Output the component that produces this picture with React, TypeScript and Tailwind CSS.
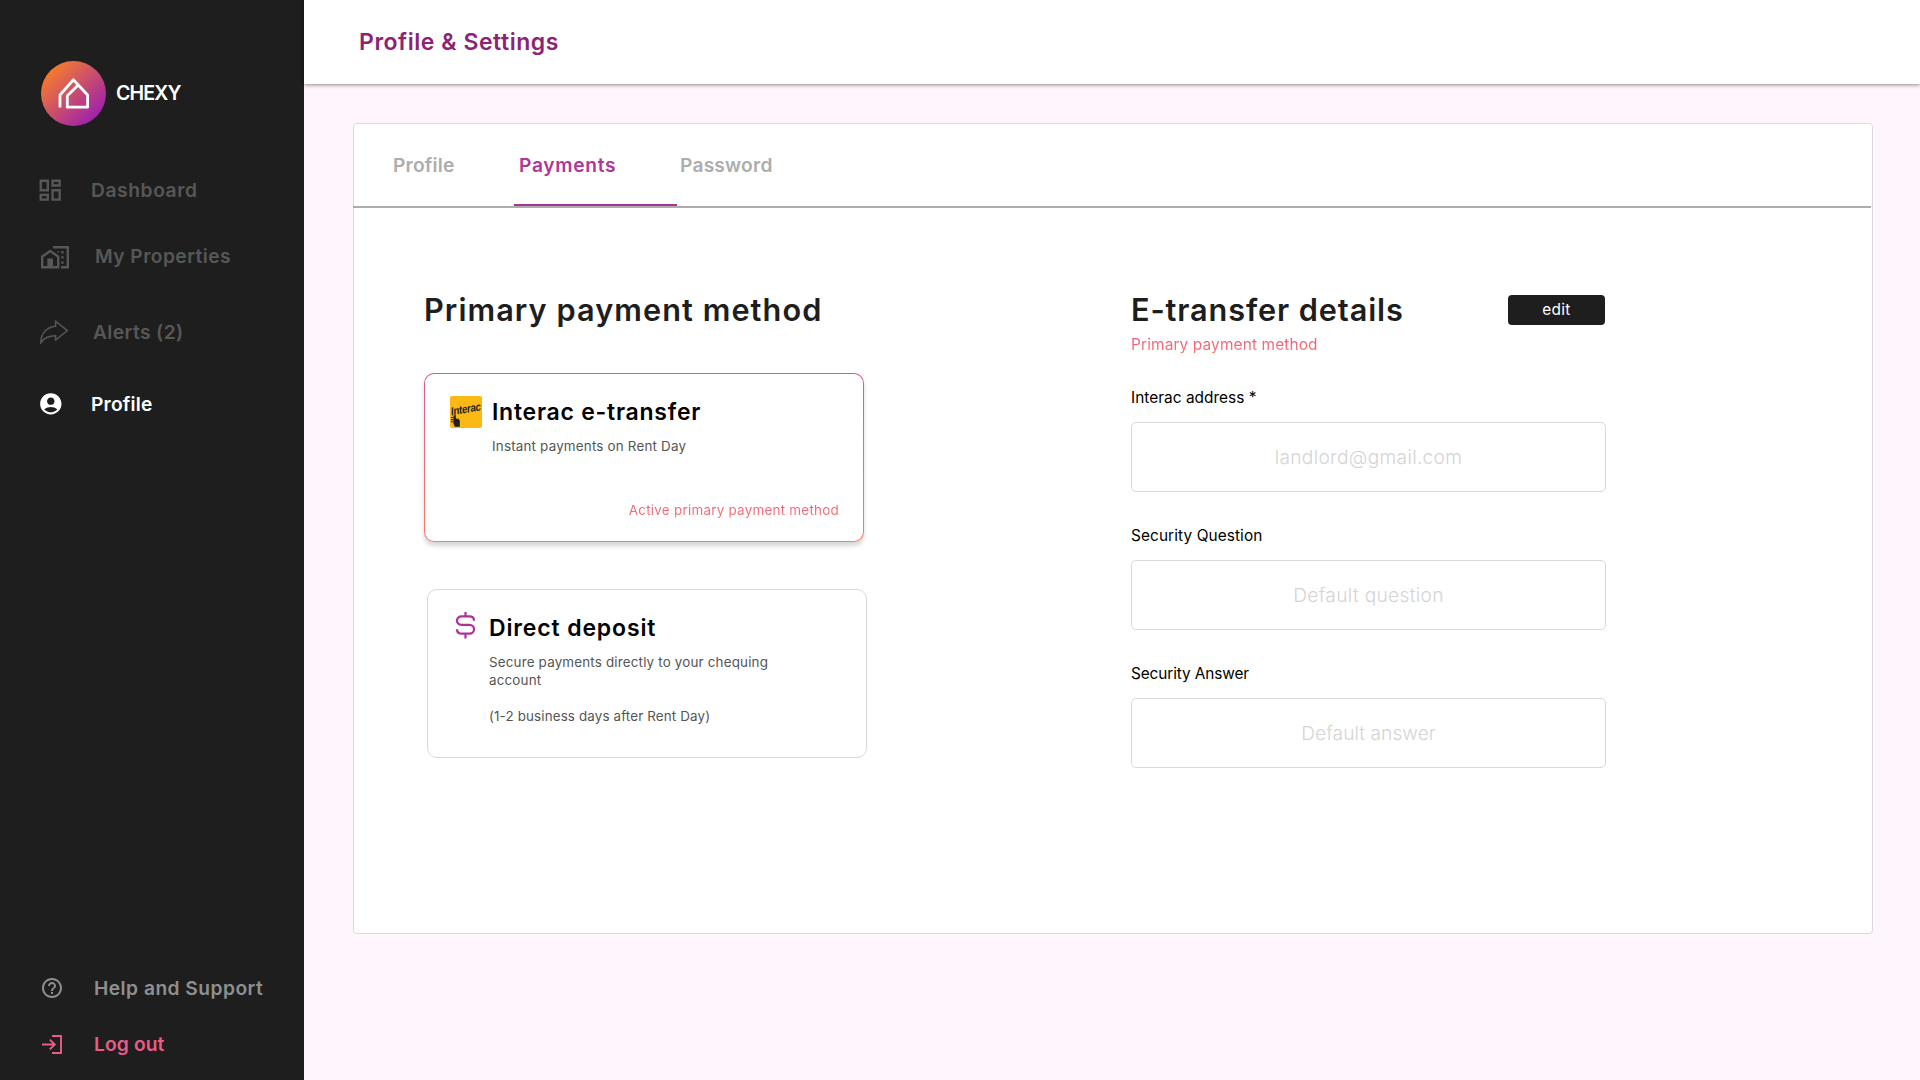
import React from "react";
import { MdAccountCircle, MdHelpOutline, MdOutlineDashboard } from "react-icons/md";

function HouseLogo() {
  return (
    <svg width="65" height="65" viewBox="0 0 65 65" fill="none" className="shrink-0">
      <defs>
        <linearGradient id="logo" x1="8" y1="8" x2="57" y2="57" gradientUnits="userSpaceOnUse">
          <stop stopColor="#f77d2a" />
          <stop offset="1" stopColor="#9c1fb0" />
        </linearGradient>
      </defs>
      <circle cx="32.5" cy="32.5" r="32.5" fill="url(#logo)" />
      <path
        d="M19 46.5V34L32.4 18.8L46.6 34V46.2H26.3V34.8L37.2 24"
        stroke="#fff"
        strokeWidth="2.8"
        strokeLinejoin="round"
      />
    </svg>
  );
}

function PropertiesIcon() {
  return (
    <svg width="28" height="23" viewBox="0 0 28 23" fill="none" stroke="currentColor" strokeWidth="2.4">
      <path d="M1.2 10.6L9.2 5L17.2 10.6V21.3H1.2Z" />
      <path d="M6.3 22V12.5H12V22Z" fill="currentColor" stroke="none" />
      <path d="M12 1.3H26.8V21.3H20" />
      <path d="M20.2 5H22.6V7.4H20.2ZM20.2 10.2H22.6V12.6H20.2ZM20.2 15.4H22.6V17.8H20.2ZM16.6 5H18V6.4H16.6Z" fill="currentColor" stroke="none" />
    </svg>
  );
}

function ShareIcon() {
  return (
    <svg width="29" height="24" viewBox="0 0 29 24" fill="none" stroke="currentColor" strokeWidth="1.5">
      <path d="M27.4 10.6L15.6 1.2V6.2C7.4 6.9 .8 12.6 .8 22.8C4 17.6 9 15.7 15.6 15.7V20Z" />
    </svg>
  );
}

function LogoutIcon() {
  return (
    <svg width="20" height="19" viewBox="0 0 20 19" fill="none" stroke="currentColor" strokeWidth="1.9">
      <path d="M0 9.5H12.6M7.8 4.6L12.8 9.5L7.8 14.4M10 1H19V18H10" />
    </svg>
  );
}

function DollarIcon() {
  return (
    <svg width="19" height="27" viewBox="0 0 19 27" fill="none" stroke="#b0309a" strokeWidth="2.2">
      <path d="M18 8.8C18 6 16 4.4 13.5 4.4H5.5C3 4.4 1 6 1 8.6S3 12.8 5.5 12.8H13.5C16 12.8 18 14.6 18 17.2S16 21.6 13.5 21.6H5.5C3 21.6 1 20 1 17.3M9.5 0V4.4M9.5 21.6V26.5" />
    </svg>
  );
}

function InteracLogo() {
  return (
    <svg width="32" height="32" viewBox="0 0 32 32" className="shrink-0">
      <rect width="32" height="32" rx="2" fill="#fdb913" />
      <text
        x="0"
        y="0"
        transform="translate(1 19.5) skewY(-10) scale(0.84 1)"
        fontFamily="Liberation Sans"
        fontWeight="700"
        fontSize="11.5"
        letterSpacing="-0.35"
        fill="#231f20"
      >
        Interac
      </text>
      <path d="M3.6 19.4L5.8 18.9V22.4L8.6 22.8L9.8 24.4V30.8H4.8L3.4 27.6Z" fill="#231f20" />
      <path d="M1 21.5H3.6M1 23.6H3.6M1 25.7H3.6" stroke="#231f20" strokeWidth="1.1" />
    </svg>
  );
}

type NavProps = { icon: React.ReactNode; label: string; row: string; gutter: string; text: string };

function NavRow({ icon, label, row, gutter, text }: NavProps) {
  return (
    <a className={`flex h-10 items-center font-semibold text-[19.2px] leading-none whitespace-nowrap ${row}`}>
      <span className={`flex shrink-0 items-center ${gutter}`}>{icon}</span>
      <span className={`pt-0.5 ${text}`}>{label}</span>
    </a>
  );
}

function Sidebar() {
  return (
    <aside className="flex h-full w-[304px] shrink-0 flex-col bg-[#1e1e1e] pt-[61px] pb-4">
      <div className="flex items-center pl-[41px] text-white">
        <HouseLogo />
        <span className="ml-[10px] text-[19.6px] leading-none font-semibold tracking-[-0.9px]">CHEXY</span>
      </div>
      <nav className="mt-11 flex flex-col text-[#575757]">
        <NavRow icon={<MdOutlineDashboard size={28.4} />} label="Dashboard" row="" gutter="w-[91px] pl-[36.4px]" text="tracking-[0.6px]" />
        <NavRow icon={<PropertiesIcon />} label="My Properties" row="mt-[26px]" gutter="w-[95px] pl-[41px] pt-[3px]" text="tracking-[0.45px]" />
        <NavRow icon={<ShareIcon />} label="Alerts (2)" row="mt-9" gutter="w-[93px] pl-10" text="tracking-[0.4px]" />
        <NavRow icon={<MdAccountCircle size={25.6} />} label="Profile" row="mt-8 text-white" gutter="w-[91px] pl-[37.8px]" text="tracking-[0.2px]" />
      </nav>
      <div className="mt-auto flex flex-col gap-4">
        <NavRow icon={<MdHelpOutline size={24} />} label="Help and Support" row="text-[#8f8f8f]" gutter="w-[94px] pl-10" text="tracking-[0.48px]" />
        <NavRow icon={<LogoutIcon />} label="Log out" row="text-[#ea5c86]" gutter="w-[94px] pl-[42px]" text="tracking-[0.13px]" />
      </div>
    </aside>
  );
}

function Field({ label, value, labelClass, valueClass }: { label: string; value: string; labelClass: string; valueClass: string }) {
  return (
    <div className="flex flex-col">
      <label className={`text-[15.4px] leading-5 text-black ${labelClass}`}>{label}</label>
      <div className={`mt-[13.5px] flex h-[70px] items-center justify-center rounded-[5px] border border-[#d9d9d9] pt-0.5 text-[19.2px] leading-none font-light text-[#d4d4d4] ${valueClass}`}>
        {value}
      </div>
    </div>
  );
}

export default function App() {
  return (
    <div className="flex h-[1080px] w-[1920px] overflow-hidden bg-[#fff5fd] font-['Inter',sans-serif]">
      <Sidebar />
      <div className="flex min-w-0 flex-1 flex-col">
        <header className="flex h-[84px] shrink-0 items-center bg-white pl-[55px] shadow-[0_1px_4px_rgba(0,0,0,0.45)]">
          <h1 className="text-[23px] leading-none font-semibold tracking-[0.54px] text-[#8c2375]">Profile &amp; Settings</h1>
        </header>
        <main className="mt-[39px] ml-[49px] flex h-[811px] w-[1520px] flex-col rounded-[4px] border border-[#dadada] bg-white">
          <div className="mr-px -ml-px flex h-[84px] shrink-0 items-stretch border-b-2 border-[#adadad] text-[19.2px] leading-none font-semibold text-[#adadad]">
            <div className="flex w-[161px] items-center pt-0.5 pl-10 tracking-[0.2px]">Profile</div>
            <div className="flex w-[163px] items-center border-b-2 border-[#ab3492] pt-1 pl-[5px] tracking-[0.68px] text-[#b23597]">Payments</div>
            <div className="flex items-center pt-0.5 pl-[3px] tracking-[0.2px]">Password</div>
          </div>
          <div className="flex">
            <section className="ml-[70px] w-[707px] pt-[82px]">
              <h2 className="text-[30.7px] leading-10 font-semibold tracking-[1.06px] whitespace-nowrap text-[#1e1e1e]">Primary payment method</h2>
              <div className="mt-[43px] flex h-[169px] w-[440px] flex-col rounded-[10px] border border-transparent bg-[linear-gradient(white,white),linear-gradient(#e3558b,#ff7a69)] [background-clip:padding-box,border-box] [background-origin:border-box] shadow-[0_4px_4px_rgba(0,0,0,0.16)]">
                <div className="flex pt-[22px] pl-[24.5px]">
                  <InteracLogo />
                  <div className="ml-[10.5px]">
                    <h3 className="mt-[2px] text-[23px] leading-7 font-semibold tracking-[0.75px] text-black">Interac e-transfer</h3>
                    <p className="mt-[11px] text-[13.4px] leading-[18px] tracking-[0.19px] text-[#555]">Instant payments on Rent Day</p>
                  </div>
                </div>
                <p className="mt-auto mr-[24px] mb-[21px] self-end bg-[linear-gradient(#e3558b,#ff7a69)] bg-clip-text text-[13.4px] leading-[20px] tracking-[0.26px] text-transparent">Active primary payment method</p>
              </div>
              <div className="mt-[47px] ml-[3px] flex h-[169px] w-[440px] rounded-[10px] border border-[#d9d9d9] pt-[22px] pl-[28px]">
                <DollarIcon />
                <div className="ml-[14px]">
                  <h3 className="mt-[1.5px] text-[23px] leading-7 font-semibold tracking-[0.86px] text-black">Direct deposit</h3>
                  <div className="mt-[11px] text-[13.4px] leading-[18px] text-[#555]">
                    <p className="w-[300px] tracking-[0.18px]">Secure payments directly to your chequing account</p>
                    <p className="mt-[18px] tracking-[0.14px]">(1-2 business days after Rent Day)</p>
                  </div>
                </div>
              </div>
            </section>
            <section className="w-[475px] pt-[82px]">
              <div className="flex items-center justify-between pr-px">
                <h2 className="text-[30.7px] leading-10 font-semibold tracking-[0.88px] whitespace-nowrap text-[#1e1e1e]">E-transfer details</h2>
                <button className="flex h-[30px] w-[97px] items-center justify-center rounded-[4px] bg-[#1e1e1e] text-[15.4px] leading-none tracking-[0.31px] text-white">edit</button>
              </div>
              <p className="mt-[5px] w-fit bg-[linear-gradient(#e3558b,#ff7a69)] bg-clip-text text-[15.4px] leading-5 tracking-[0.14px] text-transparent">Primary payment method</p>
              <div className="mt-[33px] flex flex-col gap-[34.5px]">
                <Field label="Interac address *" value="landlord@gmail.com" labelClass="tracking-[0.03px]" valueClass="tracking-[0.28px]" />
                <Field label="Security Question" value="Default question" labelClass="tracking-[0.09px]" valueClass="tracking-[0.3px]" />
                <Field label="Security Answer" value="Default answer" labelClass="tracking-[-0.12px]" valueClass="tracking-[0.03px]" />
              </div>
            </section>
          </div>
        </main>
      </div>
    </div>
  );
}
